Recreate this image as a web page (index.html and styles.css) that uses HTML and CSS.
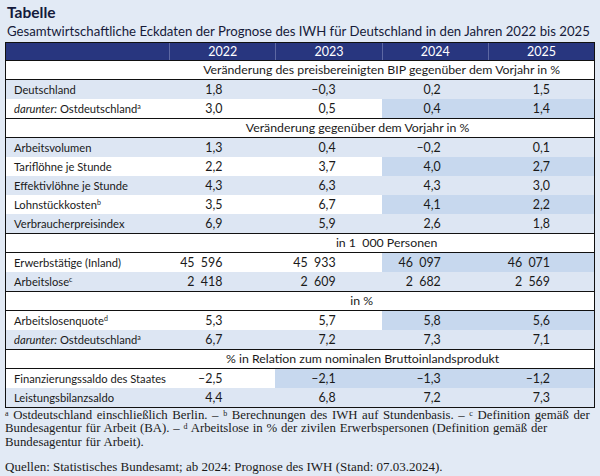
FILE: index.html
```html
<!DOCTYPE html>
<html lang="de">
<head>
<meta charset="utf-8">
<title>Tabelle</title>
<link rel="stylesheet" href="styles.css">
</head>
<body>
<div class="page">
  <h1 class="title">Tabelle</h1>
  <p class="subtitle">Gesamtwirtschaftliche Eckdaten der Prognose des IWH für Deutschland in den Jahren 2022 bis 2025</p>
  <table class="data">
    <colgroup>
      <col class="c-label"><col class="c-num"><col class="c-num"><col class="c-num"><col class="c-num">
    </colgroup>
    <thead>
      <tr><th></th><th>2022</th><th>2023</th><th>2024</th><th>2025</th></tr>
    </thead>
    <tbody>
      <tr class="group"><td></td><td colspan="4" class="gh">Veränderung des preisbereinigten BIP gegenüber dem Vorjahr in %</td></tr>
      <tr class="odd"><td>Deutschland</td><td>1,8</td><td>–0,3</td><td>0,2</td><td>1,5</td></tr>
      <tr class="even"><td><i>darunter:</i> Ostdeutschland<sup>a</sup></td><td>3,0</td><td>0,5</td><td class="fc">0,4</td><td class="fc">1,4</td></tr>

      <tr class="group"><td></td><td colspan="4" class="gh gh-2">Veränderung gegenüber dem Vorjahr in %</td></tr>
      <tr class="odd"><td>Arbeitsvolumen</td><td>1,3</td><td>0,4</td><td>–0,2</td><td>0,1</td></tr>
      <tr class="even"><td>Tariflöhne je Stunde</td><td>2,2</td><td>3,7</td><td class="fc">4,0</td><td class="fc">2,7</td></tr>
      <tr class="odd"><td>Effektivlöhne je Stunde</td><td>4,3</td><td>6,3</td><td>4,3</td><td>3,0</td></tr>
      <tr class="even"><td>Lohnstückkosten<sup>b</sup></td><td>3,5</td><td>6,7</td><td class="fc">4,1</td><td class="fc">2,2</td></tr>
      <tr class="odd"><td>Verbraucherpreisindex</td><td>6,9</td><td>5,9</td><td>2,6</td><td>1,8</td></tr>

      <tr class="group"><td></td><td colspan="4" class="gh gh-3">in 1&nbsp; 000 Personen</td></tr>
      <tr class="even"><td>Erwerbstätige (Inland)</td><td>45&nbsp; 596</td><td>45&nbsp; 933</td><td class="fc">46&nbsp; 097</td><td class="fc">46&nbsp; 071</td></tr>
      <tr class="odd"><td>Arbeitslose<sup>c</sup></td><td>2&nbsp; 418</td><td>2&nbsp; 609</td><td>2&nbsp; 682</td><td>2&nbsp; 569</td></tr>

      <tr class="group"><td></td><td colspan="4" class="gh gh-4">in %</td></tr>
      <tr class="even"><td>Arbeitslosenquote<sup>d</sup></td><td>5,3</td><td>5,7</td><td class="fc">5,8</td><td class="fc">5,6</td></tr>
      <tr class="odd"><td><i>darunter:</i> Ostdeutschland<sup>a</sup></td><td>6,7</td><td>7,2</td><td>7,3</td><td>7,1</td></tr>

      <tr class="group"><td></td><td colspan="4" class="gh gh-5">% in Relation zum nominalen Bruttoinlandsprodukt</td></tr>
      <tr class="even"><td>Finanzierungssaldo des Staates</td><td>–2,5</td><td class="fc">–2,1</td><td class="fc">–1,3</td><td class="fc">–1,2</td></tr>
      <tr class="odd"><td>Leistungsbilanzsaldo</td><td>4,4</td><td>6,8</td><td>7,2</td><td>7,3</td></tr>
    </tbody>
  </table>
  <p class="notes"><span class="wide"><sup>a</sup> Ostdeutschland einschließlich Berlin. – <sup>b</sup> Berechnungen des IWH auf Stundenbasis. – <sup>c</sup> Definition gemäß der</span><br>Bundesagentur für Arbeit (BA). – <sup>d</sup> Arbeitslose in % der zivilen Erwerbspersonen (Definition gemäß der<br>Bundesagentur für Arbeit).</p>
  <p class="source">Quellen: Statistisches Bundesamt; ab 2024: Prognose des IWH (Stand: 07.03.2024).</p>
</div>
</body>
</html>
```

FILE: styles.css
```css
html, body {
  margin: 0;
  padding: 0;
}

body {
  width: 600px;
  height: 476px;
  overflow: hidden;
  background: #e2eaf5;
  font-family: Lato, "Noto Sans", sans-serif;
  color: #1a1a1a;
}

.page {
  padding: 3px 5px 0 5px;
}

.title {
  margin: 0;
  padding-left: 2px;
  font-size: 15.5px;
  line-height: 18px;
  font-weight: 700;
  color: #141a3c;
}

.subtitle {
  margin: 1px 0 2px 0;
  padding-left: 2px;
  font-size: 13.2px;
  line-height: 18px;
  color: #161b3a;
  white-space: nowrap;
}

.data {
  width: 590px;
  table-layout: fixed;
  border-collapse: separate;
  border-spacing: 0;
  border: 1px solid #111;
  font-size: 12.4px;
}

.c-label { width: 163px; }
.c-num { width: 106px; }

.data th {
  background: #28367f;
  color: #fff;
  font-weight: 400;
  font-size: 12.5px;
  line-height: 17px;
  padding: 0;
  text-align: center;
  border-left: 1px solid #5d68a3;
}

.data th:first-child {
  border-left: 0;
}

.data td {
  padding: 0;
  line-height: 19px;
  white-space: nowrap;
  text-align: right;
}

.data td:first-child {
  text-align: left;
  padding-left: 8px;
  font-size: 11.2px;
}

.data td:nth-child(2) { padding-right: 53px; }
.data td:nth-child(3) { padding-right: 46px; }
.data td:nth-child(4) { padding-right: 47px; }
.data td:nth-child(5) { padding-right: 44px; }

.data tr.odd td {
  background: #dde6f3;
}

.data tr.even td {
  background: #ffffff;
}

.data tr.even td.fc {
  background: #c7d8ee;
}

.data tr.group td {
  background: #ffffff;
  line-height: 18px;
  border-top: 1px solid #111;
  border-bottom: 1px solid #111;
}

.data tr.group td.gh {
  text-align: center;
  padding: 0;
  font-size: 12.3px;
}

.data tr.group td.gh-2 { padding-right: 48px; }
.data tr.group td.gh-3 { padding-left: 10px; }
.data tr.group td.gh-4 { padding-right: 40px; }
.data tr.group td.gh-5 { padding-right: 38px; }

.data sup {
  font-size: 7px;
  vertical-align: 4px;
  line-height: 0;
}

.notes {
  margin: 1px 0 0 0;
  font-family: "Liberation Serif", serif;
  font-size: 12.8px;
  line-height: 13.4px;
  word-spacing: 0.6px;
  white-space: nowrap;
  color: #1a1a1a;
}

.notes .wide {
  word-spacing: 1.4px;
}

.notes sup {
  font-size: 8px;
  vertical-align: 3px;
  line-height: 0;
}

.source {
  margin: 11px 0 0 0;
  font-family: "Liberation Serif", serif;
  font-size: 13px;
  line-height: 13px;
  white-space: nowrap;
  color: #1a1a1a;
}
```
